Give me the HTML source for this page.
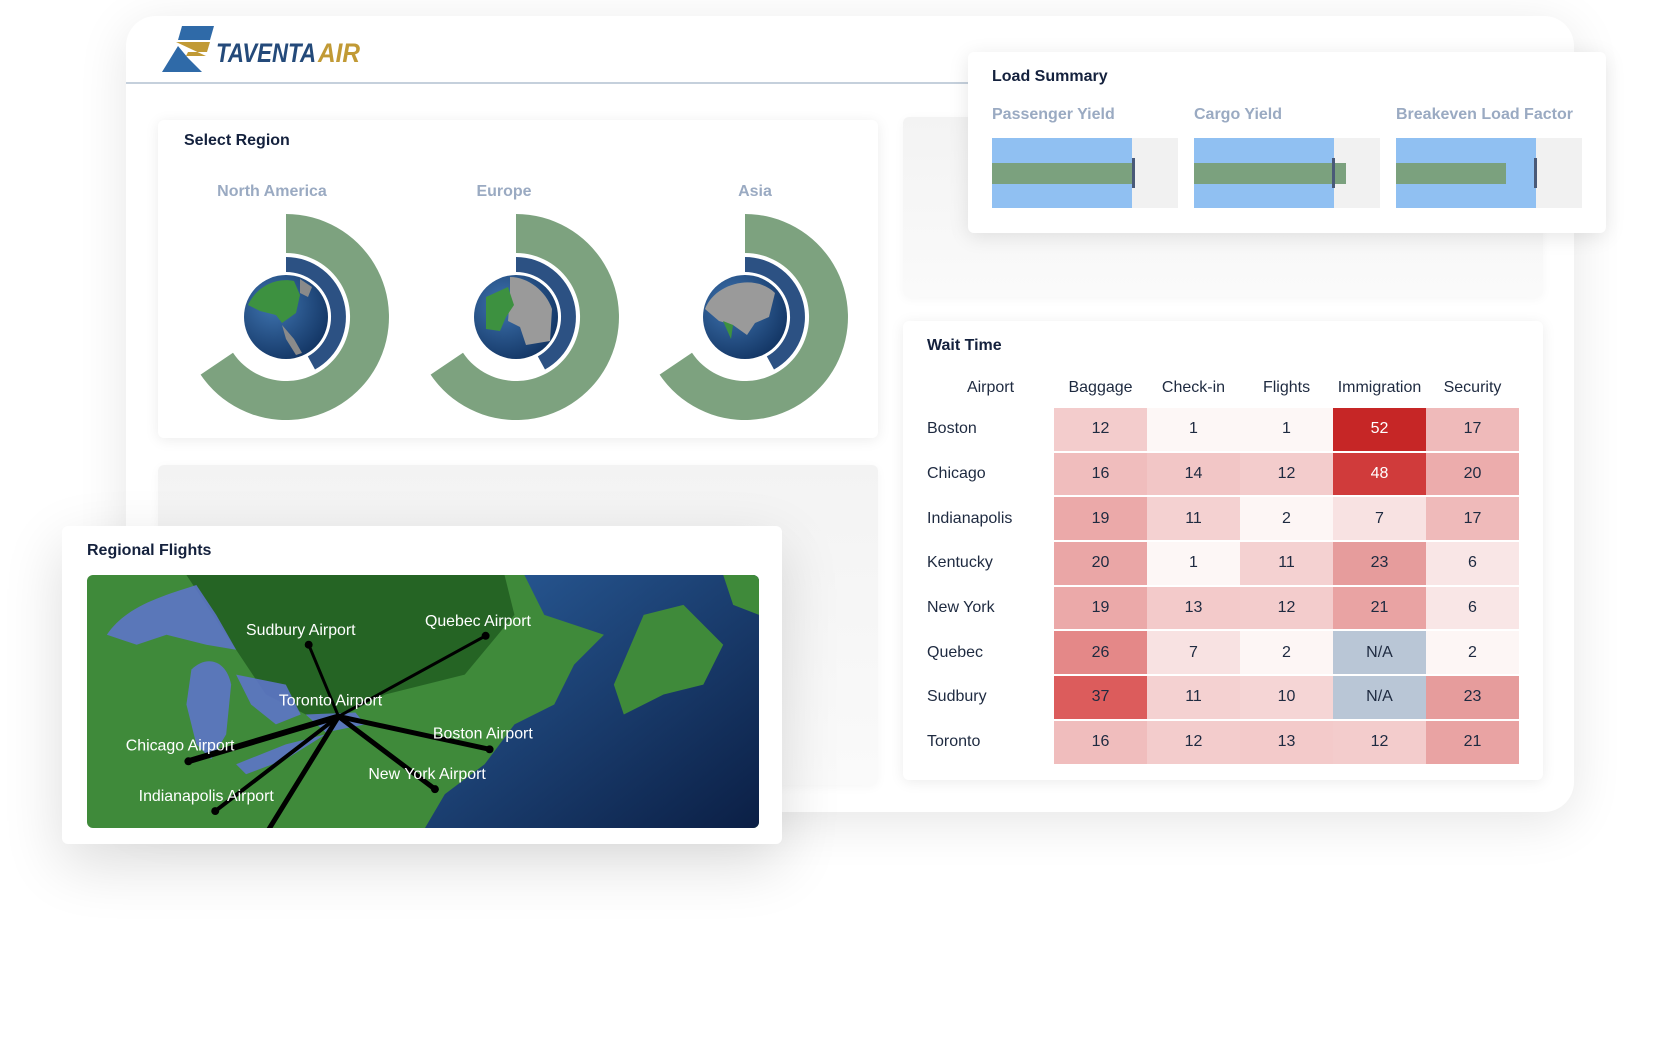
<!DOCTYPE html>
<html><head><meta charset="utf-8"><style>
*{margin:0;padding:0;box-sizing:border-box}
body{width:1667px;height:1057px;background:#fff;font-family:"Liberation Sans",sans-serif;position:relative;overflow:hidden;color:#14213d}
.abs{position:absolute}
.main{left:126px;top:16px;width:1448px;height:796px;background:#fff;border-radius:30px;box-shadow:0 10px 50px rgba(0,0,0,.10)}
.card{background:#fff;border-radius:6px;box-shadow:0 2px 14px rgba(0,0,0,.08)}
.ph{background:linear-gradient(#f3f3f3,#fafafa);border-radius:6px;box-shadow:0 2px 10px rgba(0,0,0,.04)}
.title{font-size:16px;font-weight:bold;color:#14213d}
.lbl{font-size:16px;color:#9aaac2;font-weight:bold}
table{border-collapse:separate;border-spacing:0 2.4px;font-size:16px;color:#1e2a40}
td{height:42.7px;text-align:center;width:93px}
td.n{text-align:left;width:127px;padding-left:0}
th{font-weight:normal;height:36px;font-size:16px}
.bar{position:absolute;width:186px;height:70px;top:138px;background:#f1f1f1}
.bar .b{position:absolute;left:0;top:0;height:70px;background:#90c0f2}
.bar .g{position:absolute;left:0;top:25px;height:21px;background:#7ba17e}
.bar .m{position:absolute;top:20px;width:3px;height:30px;background:#4a5a78}
</style></head><body>
<div class="abs main"></div>
<div class="abs" style="left:126px;top:82px;width:846px;height:2px;background:#c5d0dc"></div>
<svg class="abs" style="left:160px;top:22px" width="210" height="54" viewBox="0 0 210 54">
<polygon points="22,4 54,4 50,18 18,18" fill="#2f6aa8"/>
<polygon points="16,20 50,20 47,30 28,30 26,34 46,34" fill="#c19a35"/>
<polygon points="2,50 18,24 28,36 42,50" fill="#2f6aa8"/>
<text x="56" y="40" font-family="Liberation Sans" font-weight="bold" font-style="italic" font-size="27" fill="#244a7a" textLength="100" lengthAdjust="spacingAndGlyphs">TAVENTA</text>
<text x="158" y="40" font-family="Liberation Sans" font-weight="bold" font-style="italic" font-size="27" fill="#c19a35" textLength="42" lengthAdjust="spacingAndGlyphs">AIR</text>
</svg>
<div class="abs card" style="left:158px;top:120px;width:720px;height:318px"></div>
<div class="abs title" style="left:184px;top:132px">Select Region</div>
<div class="abs lbl" style="left:172px;width:200px;top:183px;text-align:center">North America</div>
<div class="abs lbl" style="left:404px;width:200px;top:183px;text-align:center">Europe</div>
<div class="abs lbl" style="left:655px;width:200px;top:183px;text-align:center">Asia</div>
<svg class="abs" style="left:0;top:0" width="900" height="440">
<defs><radialGradient id="gl" cx="35%" cy="35%" r="70%"><stop offset="0" stop-color="#3f74b0"/><stop offset="1" stop-color="#143766"/></radialGradient></defs>
<g transform="translate(286,317)">
<path d="M0,-103 A103,103 0 1 1 -85.4,57.6 L-53,35.8 A64,64 0 1 0 0,-64 Z" fill="#7da27f"/>
<path d="M0,-60 A60,60 0 0 1 29,52.5 L21.8,39.4 A45,45 0 0 0 0,-45 Z" fill="#2c5183"/>
<circle r="42" fill="url(#gl)"/>
<path d="M-38,-12 C-30,-30 -10,-40 8,-36 L14,-22 L10,-4 L-4,6 L-10,-2 L-26,-6 Z" fill="#3d9140"/>
<path d="M14,-38 L26,-30 L22,-20 L14,-24Z M-4,8 L8,22 L16,36 L10,38 L0,22Z" fill="#8a8a8a"/>
</g>
<g transform="translate(516,317)">
<path d="M0,-103 A103,103 0 1 1 -85.4,57.6 L-53,35.8 A64,64 0 1 0 0,-64 Z" fill="#7da27f"/>
<path d="M0,-60 A60,60 0 0 1 29,52.5 L21.8,39.4 A45,45 0 0 0 0,-45 Z" fill="#2c5183"/>
<circle r="42" fill="url(#gl)"/>
<path d="M-6,-40 C12,-40 30,-26 36,-8 L34,24 L10,28 L4,10 L-8,4 L-6,-20Z" fill="#9a9a9a"/>
<path d="M-30,-20 L-8,-30 L-2,-12 L-10,0 L-16,14 L-30,12Z" fill="#3d9140"/>
</g>
<g transform="translate(745,317)">
<path d="M0,-103 A103,103 0 1 1 -85.4,57.6 L-53,35.8 A64,64 0 1 0 0,-64 Z" fill="#7da27f"/>
<path d="M0,-60 A60,60 0 0 1 29,52.5 L21.8,39.4 A45,45 0 0 0 0,-45 Z" fill="#2c5183"/>
<circle r="42" fill="url(#gl)"/>
<path d="M-40,-8 C-30,-34 10,-44 30,-24 L24,0 L10,6 L2,18 L-12,8 L-26,4Z" fill="#9a9a9a"/>
<path d="M-22,4 L-12,8 L-14,22 Z" fill="#3d9140"/>
</g>
</svg>
<div class="abs ph" style="left:158px;top:465px;width:720px;height:320px"></div>
<div class="abs ph" style="left:903px;top:117px;width:640px;height:180px"></div>
<div class="abs card" style="left:968px;top:52px;width:638px;height:181px;box-shadow:0 4px 20px rgba(0,0,0,.10)"></div>
<div class="abs title" style="left:992px;top:68px">Load Summary</div>
<div class="abs lbl" style="left:992px;top:106px">Passenger Yield</div>
<div class="abs lbl" style="left:1194px;top:106px">Cargo Yield</div>
<div class="abs lbl" style="left:1396px;top:106px">Breakeven Load Factor</div>
<div class="bar" style="left:992px"><div class="b" style="width:140px"></div><div class="g" style="width:140px"></div><div class="m" style="left:140px"></div></div>
<div class="bar" style="left:1194px"><div class="b" style="width:140px"></div><div class="g" style="width:152px"></div><div class="m" style="left:138px"></div></div>
<div class="bar" style="left:1396px"><div class="b" style="width:140px"></div><div class="g" style="width:110px"></div><div class="m" style="left:138px"></div></div>
<div class="abs card" style="left:903px;top:321px;width:640px;height:459px"></div>
<div class="abs title" style="left:927px;top:337px">Wait Time</div>
<table class="abs" style="left:927px;top:368px">
<tr><th style="text-align:center;padding-right:0;width:127px">Airport</th><th>Baggage</th><th>Check-in</th><th>Flights</th><th>Immigration</th><th>Security</th></tr>
<tr><td class="n">Boston</td><td style="background:#f3cccc">12</td><td style="background:#fdf7f6">1</td><td style="background:#fdf7f6">1</td><td style="background:#c62626;color:#fff">52</td><td style="background:#efbaba">17</td></tr>
<tr><td class="n">Chicago</td><td style="background:#f0bdbd">16</td><td style="background:#f2c6c6">14</td><td style="background:#f3cccc">12</td><td style="background:#d03b3b;color:#fff">48</td><td style="background:#ecacac">20</td></tr>
<tr><td class="n">Indianapolis</td><td style="background:#eba9a9">19</td><td style="background:#f4d1d1">11</td><td style="background:#fdf6f5">2</td><td style="background:#f8e2e2">7</td><td style="background:#efbaba">17</td></tr>
<tr><td class="n">Kentucky</td><td style="background:#eaa6a6">20</td><td style="background:#fdf7f6">1</td><td style="background:#f4d1d1">11</td><td style="background:#e69c9c">23</td><td style="background:#f9e6e6">6</td></tr>
<tr><td class="n">New York</td><td style="background:#eba9a9">19</td><td style="background:#f3caca">13</td><td style="background:#f3cccc">12</td><td style="background:#e9a3a3">21</td><td style="background:#f9e6e6">6</td></tr>
<tr><td class="n">Quebec</td><td style="background:#e48888">26</td><td style="background:#f8e2e2">7</td><td style="background:#fdf6f5">2</td><td style="background:#b9c6d6">N/A</td><td style="background:#fdf6f5">2</td></tr>
<tr><td class="n">Sudbury</td><td style="background:#dc5c5c">37</td><td style="background:#f4d1d1">11</td><td style="background:#f5d5d5">10</td><td style="background:#b9c6d6">N/A</td><td style="background:#e69c9c">23</td></tr>
<tr><td class="n">Toronto</td><td style="background:#f0bdbd">16</td><td style="background:#f3cccc">12</td><td style="background:#f3caca">13</td><td style="background:#f3cccc">12</td><td style="background:#e9a3a3">21</td></tr>
</table>
<div class="abs card" style="left:62px;top:526px;width:720px;height:318px;box-shadow:0 20px 60px rgba(0,0,0,.14)"></div>
<div class="abs title" style="left:87px;top:542px">Regional Flights</div>
<svg class="abs" style="left:87px;top:575px;border-radius:6px" width="672" height="253" viewBox="0 0 676 254" preserveAspectRatio="none">
<defs><linearGradient id="oc" x1="0" y1="0" x2="1" y2="1"><stop offset="0" stop-color="#2a5d9a"/><stop offset="1" stop-color="#0b1f45"/></linearGradient></defs>
<rect width="676" height="254" fill="#3f8a3a"/>
<path d="M100,0 L420,0 L430,40 L380,100 L300,120 L240,150 L180,120 L140,60Z" fill="#1f5a1f" opacity=".8"/>
<path d="M440,0 L676,0 L676,254 L340,254 L360,220 L400,190 L430,150 L470,130 L490,90 L520,60 L460,40Z" fill="url(#oc)"/>
<path d="M560,40 L600,30 L640,70 L620,110 L580,120 L540,140 L530,110Z" fill="#3f8a3a"/>
<path d="M640,0 L676,0 L676,40 L650,30Z" fill="#3f8a3a"/>
<path d="M20,60 C40,30 80,20 110,10 L130,40 L150,75 L120,70 L80,60 L50,70Z" fill="#5d74c8" opacity=".9"/>
<path d="M105,95 C120,80 140,85 145,110 L140,160 L125,185 L110,170 L100,130Z" fill="#5d74c8" opacity=".9"/>
<path d="M150,100 L200,110 L215,140 L190,150 L165,130Z" fill="#5d74c8" opacity=".9"/>
<path d="M220,140 L270,138 L280,150 L240,158Z M150,190 L200,170 L240,160 L200,185 L160,200Z" fill="#5d74c8" opacity=".9"/>
<g stroke="#000" stroke-linecap="round">
<line x1="253" y1="142" x2="223" y2="70" stroke-width="3"/>
<line x1="253" y1="142" x2="401" y2="61" stroke-width="3"/>
<line x1="253" y1="142" x2="405" y2="175" stroke-width="5"/>
<line x1="253" y1="142" x2="350" y2="215" stroke-width="5"/>
<line x1="253" y1="142" x2="102" y2="187" stroke-width="6"/>
<line x1="253" y1="142" x2="129" y2="237" stroke-width="4"/>
<line x1="253" y1="142" x2="180" y2="260" stroke-width="5"/>
</g>
<g fill="#000"><circle cx="223" cy="70" r="4"/><circle cx="401" cy="61" r="4"/><circle cx="405" cy="175" r="4"/><circle cx="350" cy="215" r="4"/><circle cx="102" cy="187" r="4"/><circle cx="129" cy="237" r="4"/></g>
<g fill="#fff" font-family="Liberation Sans" font-size="16">
<text x="160" y="60">Sudbury Airport</text>
<text x="340" y="51">Quebec Airport</text>
<text x="193" y="131">Toronto Airport</text>
<text x="348" y="164">Boston Airport</text>
<text x="39" y="176">Chicago Airport</text>
<text x="283" y="205">New York Airport</text>
<text x="52" y="227">Indianapolis Airport</text>
</g>
</svg>
</body></html>
